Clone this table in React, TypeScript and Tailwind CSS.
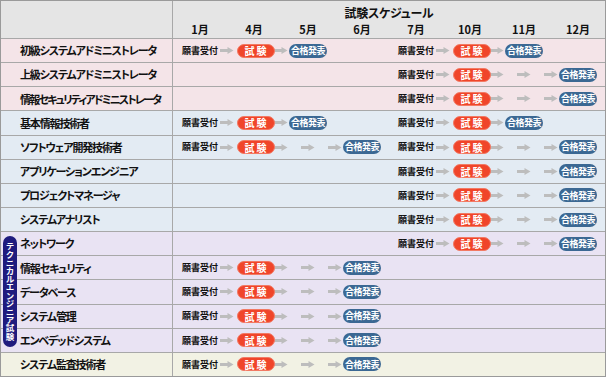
const COL_START = [
  "",
  "col-start-1",
  "col-start-2",
  "col-start-3",
  "col-start-4",
  "col-start-5",
  "col-start-6",
  "col-start-7",
  "col-start-8",
  "col-start-9",
  "col-start-10",
  "col-start-11",
  "col-start-12",
  "col-start-13",
  "col-start-14",
  "col-start-15",
];

const MONTHS = ["1月", "4月", "5月", "6月", "7月", "10月", "11月", "12月"];

type Seg = [number, number, number]; // apply, exam, result (month column 1..8)

const PINK = "bg-[#f4e4e8]";
const BLUE = "bg-[#e3ebf3]";
const PURPLE = "bg-[#e9e3f3]";
const CREAM = "bg-[#f2f2e4]";

const ROWS: { name: string; bg: string; segs: Seg[]; tight?: boolean }[] = [
  { name: "初級システムアドミニストレータ", bg: PINK, segs: [[1, 2, 3], [5, 6, 7]] },
  { name: "上級システムアドミニストレータ", bg: PINK, segs: [[5, 6, 8]] },
  { name: "情報セキュリティアドミニストレータ", bg: PINK, segs: [[5, 6, 8]], tight: true },
  { name: "基本情報技術者", bg: BLUE, segs: [[1, 2, 3], [5, 6, 7]] },
  { name: "ソフトウェア開発技術者", bg: BLUE, segs: [[1, 2, 4], [5, 6, 8]] },
  { name: "アプリケーションエンジニア", bg: BLUE, segs: [[5, 6, 8]] },
  { name: "プロジェクトマネージャ", bg: BLUE, segs: [[5, 6, 8]] },
  { name: "システムアナリスト", bg: BLUE, segs: [[5, 6, 8]] },
  { name: "ネットワーク", bg: PURPLE, segs: [[5, 6, 8]] },
  { name: "情報セキュリティ", bg: PURPLE, segs: [[1, 2, 4]] },
  { name: "データベース", bg: PURPLE, segs: [[1, 2, 4]] },
  { name: "システム管理", bg: PURPLE, segs: [[1, 2, 4]] },
  { name: "エンベデッドシステム", bg: PURPLE, segs: [[1, 2, 4]] },
  { name: "システム監査技術者", bg: CREAM, segs: [[1, 2, 4]] },
];

const Arrow = () => (
  <svg width="14" height="7" viewBox="0 0 14 7">
    <rect x="0" y="2" width="8" height="3" fill="#bdbdbd" />
    <polygon points="7.5,0 13.5,3.5 7.5,7" fill="#bdbdbd" />
  </svg>
);

const Cell = ({ start, children }: { start: number; children: React.ReactNode }) => (
  <div className={`${COL_START[start]} col-span-2 row-start-1 flex items-center justify-center`}>
    {children}
  </div>
);

const renderSeg = ([a, e, r]: Seg, key: number) => {
  const out: React.ReactNode[] = [];
  out.push(
    <Cell key={`${key}-a`} start={2 * a - 1}>
      <span className="whitespace-nowrap text-[9px] font-bold text-[#111]">願書受付</span>
    </Cell>
  );
  for (let b = a; b < r; b++) {
    out.push(
      <Cell key={`${key}-b${b}`} start={2 * b}>
        <Arrow />
      </Cell>
    );
  }
  for (let c = e + 1; c < r; c++) {
    out.push(
      <Cell key={`${key}-m${c}`} start={2 * c - 1}>
        <Arrow />
      </Cell>
    );
  }
  out.push(
    <Cell key={`${key}-e`} start={2 * e - 1}>
      <span className="ml-[3px] flex h-[14px] w-[38px] items-center justify-center rounded-full border border-[#f27a64] bg-[#f0452a] pl-[2px] text-[10px] font-bold tracking-[2px] text-white">
        試験
      </span>
    </Cell>
  );
  out.push(
    <Cell key={`${key}-r`} start={2 * r - 1}>
      <span className="flex h-[14px] w-[38px] items-center justify-center whitespace-nowrap rounded-full bg-[#3b6893] text-[9px] font-bold tracking-[-0.5px] text-white">
        合格発表
      </span>
    </Cell>
  );
  return out;
};

export default function App() {
  return (
    <div className="relative flex h-[377px] w-[606px] flex-col overflow-hidden border border-[#9a9a9a] font-['Noto_Sans_CJK_JP',sans-serif] text-[#111]">
      <div className="flex h-[38px] shrink-0 border-b border-[#a8a8a8] bg-[#e5e5e5]">
        <div className="w-[172px] border-r border-[#a8a8a8]" />
        <div className="flex flex-1 flex-col">
          <div className="pt-[3px] text-center text-[12px] leading-[18px] font-bold tracking-[-0.3px] [font-feature-settings:'palt']">
            試験スケジュール
          </div>
          <div className="grid grid-cols-8 text-center text-[11px] leading-[14px] font-bold">
            {MONTHS.map((m) => (
              <span key={m}>{m}</span>
            ))}
          </div>
        </div>
      </div>
      <div className="flex min-h-0 flex-1 flex-col">
        {ROWS.map((row, i) => (
          <div
            key={row.name}
            className={`flex min-h-0 flex-1 basis-0 ${row.bg} ${i < ROWS.length - 1 ? "border-b border-[#a8a8a8]" : ""}`}
          >
            <div
              className={`flex w-[172px] shrink-0 items-center overflow-hidden whitespace-nowrap border-r border-[#a8a8a8] pl-[19px] text-[11px] font-bold [font-feature-settings:'palt'] ${row.tight ? "tracking-[-1.8px]" : "tracking-[-1.15px]"}`}
            >
              {row.name}
            </div>
            <div className="grid flex-1 grid-cols-16 items-center">
              {row.segs.flatMap((s, k) => renderSeg(s, k))}
            </div>
          </div>
        ))}
      </div>
      <div className="absolute left-[2px] top-[235px] flex h-[111px] w-[14px] items-center justify-center rounded-full bg-[#1f1b7e]">
        <span className="text-[8.5px] leading-[14px] font-bold tracking-[-0.3px] text-white [text-orientation:upright] [writing-mode:vertical-rl]">
          テクニカルエンジニア試験
        </span>
      </div>
    </div>
  );
}
